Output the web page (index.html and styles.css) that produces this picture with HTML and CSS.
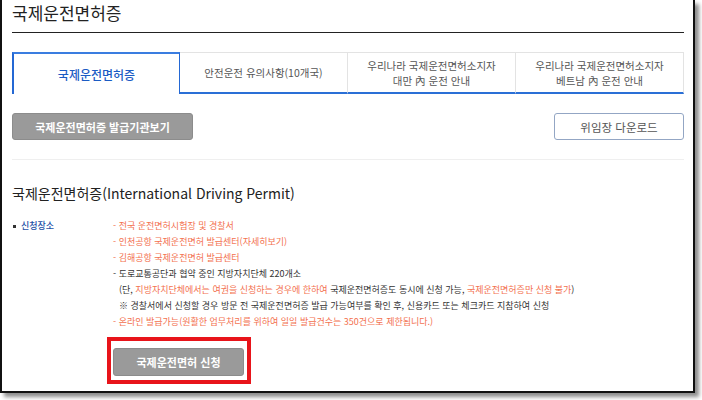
FILE: index.html
```html
<!DOCTYPE html>
<html lang="ko">
<head>
<meta charset="utf-8">
<link rel="stylesheet" href="styles.css">
</head>
<body>
<div class="frame">
  <h1 class="title">국제운전면허증</h1>
  <ul class="tabs">
    <li class="tab active">국제운전면허증</li>
    <li class="tab">안전운전 유의사항(10개국)</li>
    <li class="tab">우리나라 국제운전면허소지자<br>대만 內 운전 안내</li>
    <li class="tab">우리나라 국제운전면허소지자<br>베트남 內 운전 안내</li>
  </ul>
  <div class="btn-row">
    <span class="btn btn-gray">국제운전면허증 발급기관보기</span>
    <span class="btn btn-outline">위임장 다운로드</span>
  </div>
  <div class="sep"></div>
  <h2 class="heading">국제운전면허증(International Driving Permit)</h2>
  <div class="info">
    <div class="label"><span class="dot"></span>신청장소</div>
    <div class="lines">
      <p class="orange">- 전국 운전면허시험장 및 경찰서</p>
      <p class="orange">- 인천공항 국제운전면허 발급센터(자세히보기)</p>
      <p class="orange">- 김해공항 국제운전면허 발급센터</p>
      <p>- 도로교통공단과 협약 중인 지방자치단체 220개소</p>
      <p class="ind">(단, <span class="orange">지방자치단체에서는 여권을 신청하는 경우에 한하여</span> 국제운전면허증도 동시에 신청 가능, <span class="orange">국제운전면허증만 신청 불가</span>)</p>
      <p class="ind">※ 경찰서에서 신청할 경우 방문 전 국제운전면허증 발급 가능여부를 확인 후, 신용카드 또는 체크카드 지참하여 신청</p>
      <p class="orange">- 온라인 발급가능(원활한 업무처리를 위하여 일일 발급건수는 350건으로 제한됩니다.)</p>
    </div>
  </div>
  <div class="apply-wrap">
    <div class="highlight">
      <span class="btn btn-apply">국제운전면허 신청</span>
    </div>
  </div>
</div>
</body>
</html>
```
FILE: styles.css
```css
* { box-sizing: border-box; }
html, body { margin: 0; padding: 0; background: #fff; }
body {
  width: 702px;
  height: 400px;
  overflow: hidden;
  font-family: "Noto Sans CJK KR", "Noto Sans", sans-serif;
  color: #333;
}
.frame {
  width: 695px;
  height: 393px;
  background: #fff;
  border-left: 2px solid #111;
  border-right: 2px solid #111;
  border-bottom: 2px solid #111;
  box-shadow: 4px 4px 4px rgba(0,0,0,0.45);
  padding: 0 9px 0 10px;
}
.title {
  margin: 0;
  padding-top: 1px;
  font-size: 17px;
  font-weight: 400;
  line-height: 24px;
  color: #222;
  height: 33px;
  border-bottom: 1px solid #222;
}
.tabs {
  list-style: none;
  margin: 19px 0 0;
  padding: 0;
  display: grid;
  grid-template-columns: repeat(4, 1fr);
  height: 42px;
}
.tab {
  display: flex;
  align-items: center;
  justify-content: center;
  text-align: center;
  font-size: 10.5px;
  line-height: 15px;
  color: #555;
  border-top: 1px solid #e3e3e3;
  border-right: 1px solid #e3e3e3;
  border-bottom: 2px solid #2a6fd6;
}
.tab.active {
  color: #1b5cc4;
  font-size: 12px;
  font-weight: 500;
  border: 2px solid #2468d4;
  border-bottom: none;
  border-top-color: #3a7de0;
  border-right-width: 1px;
}
.btn-row {
  display: flex;
  justify-content: space-between;
  margin-top: 19px;
}
.btn {
  display: inline-flex;
  align-items: center;
  justify-content: center;
  height: 27px;
  border-radius: 3px;
  font-size: 11px;
}
.btn-gray {
  width: 181px;
  background: #9a9a9a;
  border: 1px solid #8c8c8c;
  color: #fff;
  font-weight: 700;
}
.btn-outline {
  width: 130px;
  background: #fff;
  border: 1px solid #93a6c4;
  color: #555;
  font-size: 11.5px;
}
.sep {
  margin-top: 19px;
  border-top: 1px solid #efefef;
}
.heading {
  margin: 23px 0 0;
  font-size: 14px;
  font-weight: 400;
  line-height: 20px;
  color: #222;
}
.info {
  display: grid;
  grid-template-columns: 101px 1fr;
  margin-top: 15px;
  font-size: 9px;
  line-height: 16px;
}
.label {
  color: #1e50a6;
  font-weight: 500;
  display: flex;
  align-items: center;
  height: 16px;
}
.dot {
  width: 3px;
  height: 3px;
  background: #333;
  margin: 0 5px 0 1px;
}
.lines p { margin: 0; white-space: nowrap; }
.lines .ind { padding-left: 6px; }
.orange { color: #f3714f; }
.apply-wrap {
  margin-top: 7px;
  padding-left: 95px;
}
.highlight {
  display: inline-block;
  border: 4px solid #e8141a;
  padding: 7px 3px 4px 2px;
}
.btn-apply {
  width: 131px;
  height: 28px;
  background: #9a9a9a;
  border: 1px solid #8c8c8c;
  color: #fff;
  font-weight: 700;
  font-size: 11px;
}
```
